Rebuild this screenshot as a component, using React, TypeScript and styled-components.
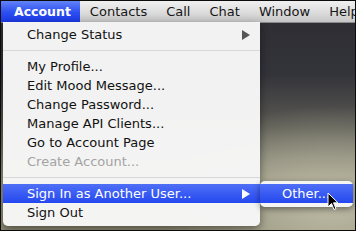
import React from "react"
import styled, { createGlobalStyle } from "styled-components"

const Global = createGlobalStyle`
  html, body { margin: 0; padding: 0; }
  body { width: 356px; height: 231px; overflow: hidden; background: #000; }
`

const font = `"DejaVu Sans", "Liberation Sans", sans-serif`

const Screen = styled.div`
  position: relative;
  width: 354px;
  height: 229px;
  border: 1px solid #0c0c0a;
  overflow: hidden;
  font-family: ${font};
  background:
    radial-gradient(ellipse 170px 100px at 330px 205px, rgba(192, 190, 168, 0.9), rgba(192, 190, 168, 0) 100%),
    linear-gradient(180deg, #2c2c31 0%, #33333a 32%, #5b5a53 55%, #979581 78%, #8d8a74 100%);
`

const MenuBar = styled.div`
  display: flex;
  align-items: stretch;
  height: 21px;
  background: linear-gradient(180deg, #f0f0f0 0%, #dedede 50%, #c6c6c6 100%);
  border-bottom: 1px solid #8a8a8a;
`

const BarItem = styled.div<{ $active?: boolean }>`
  display: flex;
  align-items: center;
  padding: 0 9.5px 0 ${(p) => (p.$active ? "13px" : "9.5px")};
  font-size: ${(p) => (p.$active ? "12.5px" : "13px")};
  font-weight: ${(p) => (p.$active ? 700 : 400)};
  color: ${(p) => (p.$active ? "#fff" : "#161616")};
  background: ${(p) =>
    p.$active ? "linear-gradient(180deg, #6383f7 0%, #2c4ef1 55%, #1b3ae6 100%)" : "none"};
  white-space: nowrap;
`

const Dropdown = styled.div`
  position: absolute;
  left: 2px;
  top: 21px;
  width: 257px;
  padding: 3px 0 4px;
  background: rgba(246, 246, 246, 0.98);
  border-radius: 0 0 5px 5px;
  box-shadow: 0 3px 8px rgba(0, 0, 0, 0.45);
`

const Item = styled.div<{ $disabled?: boolean; $selected?: boolean }>`
  display: flex;
  align-items: center;
  justify-content: space-between;
  height: 19px;
  padding: 0 10px 0 24px;
  font-size: 13px;
  color: ${(p) => (p.$selected ? "#fff" : p.$disabled ? "#a3a3a3" : "#111")};
  background: ${(p) => (p.$selected ? "linear-gradient(180deg, #4f6ff6 0%, #2448ef 100%)" : "none")};
  white-space: nowrap;
`

const Separator = styled.div`
  height: 1px;
  margin: 6px 0 6px;
  background: #d8d8d8;
`

const Arrow = styled.span<{ $light?: boolean }>`
  width: 0;
  height: 0;
  border-top: 5px solid transparent;
  border-bottom: 5px solid transparent;
  border-left: 8px solid ${(p) => (p.$light ? "#fff" : "#555")};
`

const SubMenu = styled.div`
  position: absolute;
  left: 259px;
  top: 180px;
  width: 93px;
  padding: 3px 0 4px;
  background: rgba(246, 246, 246, 0.98);
  border-radius: 5px;
  box-shadow: 0 2px 6px rgba(0, 0, 0, 0.45);
`

const SubItem = styled(Item)`
  padding: 0 0 0 22px;
  justify-content: flex-start;
`

const Cursor = styled.svg`
  position: absolute;
  left: 326px;
  top: 191px;
`

export default function App() {
  return (
    <>
      <Global />
      <Screen>
        <MenuBar>
          <BarItem $active>Account</BarItem>
          <BarItem>Contacts</BarItem>
          <BarItem>Call</BarItem>
          <BarItem>Chat</BarItem>
          <BarItem>Window</BarItem>
          <BarItem>Help</BarItem>
        </MenuBar>
        <Dropdown>
          <Item>
            Change Status
            <Arrow />
          </Item>
          <Separator />
          <Item>My Profile...</Item>
          <Item>Edit Mood Message...</Item>
          <Item>Change Password...</Item>
          <Item>Manage API Clients...</Item>
          <Item>Go to Account Page</Item>
          <Item $disabled>Create Account...</Item>
          <Separator />
          <Item $selected>
            Sign In as Another User...
            <Arrow $light />
          </Item>
          <Item>Sign Out</Item>
        </Dropdown>
        <SubMenu>
          <SubItem $selected>Other...</SubItem>
        </SubMenu>
        <Cursor width="12" height="19" viewBox="0 0 12 19">
          <path
            d="M1 1 L1 15 L4.5 11.5 L7 17.5 L9 16.5 L6.5 10.8 L11 10.8 Z"
            fill="#000"
            stroke="#fff"
            strokeWidth="1"
            strokeLinejoin="round"
          />
        </Cursor>
      </Screen>
    </>
  )
}
